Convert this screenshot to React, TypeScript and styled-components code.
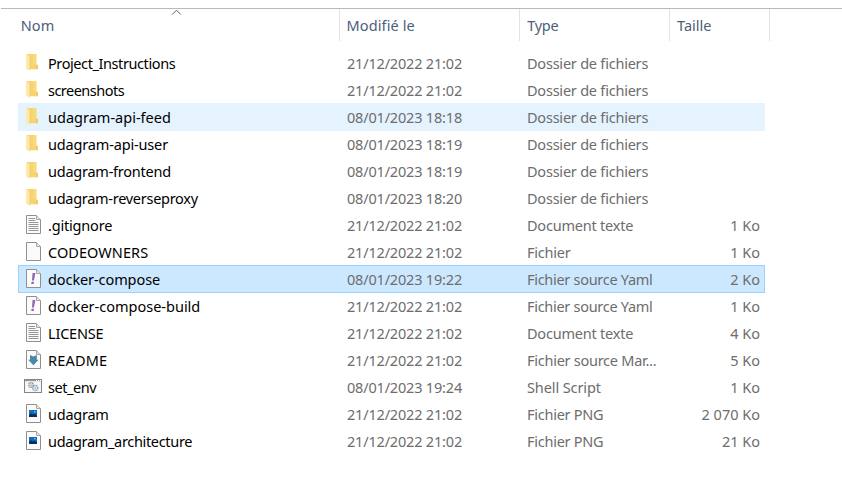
import React from "react";
import styled, { createGlobalStyle, css } from "styled-components";

const GlobalStyle = createGlobalStyle`
  *, *::before, *::after { box-sizing: border-box; }
  body {
    margin: 0;
    background: #fff;
    font-family: "Noto Sans", "Open Sans", sans-serif;
    font-size: 14.5px;
    color: #6d6d6d;
  }
`;

const COLUMNS = "322px 180px 150px 95px";

const Window = styled.main`
  width: 842px;
  height: 493px;
  padding-top: 8px;
  overflow: hidden;
`;

const Header = styled.header`
  position: relative;
  display: flex;
  height: 33px;
  margin-left: 1px;
  border-top: 1px solid #b9b9b9;
`;

const HeaderCell = styled.div<{ $width: number; $pad: number }>`
  width: ${(p) => p.$width}px;
  padding-left: ${(p) => p.$pad}px;
  border-right: 1px solid #e3e3e3;
  line-height: 33px;
  color: #4c607a;
`;

const SortArrow = styled.svg`
  position: absolute;
  left: 170px;
  top: 0;
`;

const List = styled.div`
  display: flex;
  flex-direction: column;
  margin: 8px 0 0 18px;
  width: 747px;
`;

type RowState = "normal" | "hover" | "selected";

const Row = styled.div<{ $state: RowState }>`
  display: grid;
  grid-template-columns: ${COLUMNS};
  height: 28px;
  margin-bottom: -1px;
  line-height: 28px;
  ${(p) => p.$state === "hover" && css`background: #e5f3ff;`}
  ${(p) =>
    p.$state === "selected" &&
    css`
      background: #cce8ff;
      box-shadow: inset 0 0 0 1px #99d1ff;
    `}
`;

const NameCell = styled.div`
  display: flex;
  padding-left: 6px;
  gap: 6px;
  color: #000;
`;

const DateCell = styled.div`
  padding-left: 7px;
`;

const TypeCell = styled.div`
  padding-left: 7px;
`;

const SizeCell = styled.div`
  padding-right: 5px;
  text-align: right;
`;

const Label = styled.span<{ $track?: number }>`
  letter-spacing: ${(p) => p.$track ?? 0}px;
  white-space: pre;
`;

const IconBox = styled.svg`
  flex: none;
  width: 18px;
  height: 28px;
`;

type IconKind = "folder" | "text" | "blank" | "yaml" | "markdown" | "script" | "image";

const Sheet = () => (
  <>
    <path d="M2.5 4.5H12.5L16.5 8.5V22.5H2.5Z" fill="#fbfbfb" stroke="#8f8f8f" />
    <path d="M12.5 4.5V8.5H16.5" fill="#e8e8e8" stroke="#a6a6a6" />
  </>
);

function FileIcon({ kind }: { kind: IconKind }) {
  switch (kind) {
    case "folder":
      return (
        <IconBox viewBox="0 0 18 28">
          <path d="M3 5H12.3V15.5L13.7 16V20.3H3Z" fill="#f6d373" />
          <path d="M9 5H12.3V15.5H9Z" fill="#f9d978" />
          <path d="M12.3 15.5L13.8 16V20.3H12.3Z" fill="#efc765" />
          <path d="M2 5L6 7.3V22L2 19.6Z" fill="#ffe9a6" />
          <path d="M6 7.3V20.3" stroke="#e8c56b" strokeWidth=".7" />
        </IconBox>
      );
    case "text":
      return (
        <IconBox viewBox="0 0 18 28">
          <Sheet />
          <path
            d="M4.5 7.5H11M4.5 9.5H11.5M4.5 11.5H14.5M4.5 13.5H14.5M4.5 15.5H14.5M4.5 17.5H14.5M4.5 19.5H14.5"
            stroke="#969696"
          />
        </IconBox>
      );
    case "blank":
      return (
        <IconBox viewBox="0 0 18 28">
          <Sheet />
        </IconBox>
      );
    case "yaml":
      return (
        <IconBox viewBox="0 0 18 28">
          <Sheet />
          <path d="M8.6 8H11.4L9.9 15.5H8Z" fill="#8e63b5" />
          <path d="M7.7 16.7H10L9.6 19H7.2Z" fill="#8e63b5" />
        </IconBox>
      );
    case "markdown":
      return (
        <IconBox viewBox="0 0 18 28">
          <Sheet />
          <path d="M6 9L9.4 10.5L12.8 9V13.7H14.6L9.4 19.2L4.2 13.7H6Z" fill="#4a87a8" />
        </IconBox>
      );
    case "script":
      return (
        <IconBox viewBox="0 0 18 28">
          <rect x=".5" y="6.5" width="17" height="13" fill="#f7f7f7" stroke="#858585" />
          <path d="M1 7.6H17" stroke="#9b9b9b" strokeWidth="1.3" />
          <path d="M12 7.5H13M14 7.5H15M16 7.5H17" stroke="#fff" />
          <circle cx="7" cy="12" r="2.3" fill="#ececec" stroke="#8d8d8d" strokeWidth="1.4" strokeDasharray="1.2 .6" />
          <circle cx="11.3" cy="15" r="2.6" fill="#e4edf3" stroke="#7f9cb0" strokeWidth="1.4" strokeDasharray="1.2 .6" />
          <circle cx="7" cy="12" r=".7" fill="#999" />
          <circle cx="11.3" cy="15" r=".8" fill="#7f9cb0" />
        </IconBox>
      );
    case "image":
      return (
        <IconBox viewBox="0 0 18 28">
          <Sheet />
          <rect x="5" y="10" width="8" height="7" fill="#0f6cbd" />
          <path d="M5 15L7 13.2L9 14.6L10.5 13.6L13 15.6V17H5Z" fill="#0a2f57" />
          <circle cx="10.8" cy="11.7" r=".8" fill="#8fd3ff" />
        </IconBox>
      );
  }
}

interface Entry {
  icon: IconKind;
  name: string;
  track: number;
  date: string;
  type: string;
  typeTrack: number;
  size?: string;
  state?: RowState;
}

const folder = (name: string, track: number, date: string, state?: RowState): Entry => ({
  icon: "folder",
  name,
  track,
  date,
  type: "Dossier de fichiers",
  typeTrack: -0.22,
  state,
});

const entries: Entry[] = [
  folder("Project_Instructions", -0.41, "21/12/2022 21:02"),
  folder("screenshots", -0.52, "21/12/2022 21:02"),
  folder("udagram-api-feed", 0.01, "08/01/2023 18:18", "hover"),
  folder("udagram-api-user", -0.16, "08/01/2023 18:19"),
  folder("udagram-frontend", -0.24, "08/01/2023 18:19"),
  folder("udagram-reverseproxy", -0.28, "08/01/2023 18:20"),
  { icon: "text", name: ".gitignore", track: -0.19, date: "21/12/2022 21:02", type: "Document texte", typeTrack: -0.21, size: "1 Ko" },
  { icon: "blank", name: "CODEOWNERS", track: 0.06, date: "21/12/2022 21:02", type: "Fichier", typeTrack: -0.22, size: "1 Ko" },
  { icon: "yaml", name: "docker-compose", track: -0.09, date: "08/01/2023 19:22", type: "Fichier source Yaml", typeTrack: -0.29, size: "2 Ko", state: "selected" },
  { icon: "yaml", name: "docker-compose-build", track: 0, date: "21/12/2022 21:02", type: "Fichier source Yaml", typeTrack: -0.29, size: "1 Ko" },
  { icon: "text", name: "LICENSE", track: -0.19, date: "21/12/2022 21:02", type: "Document texte", typeTrack: -0.21, size: "4 Ko" },
  { icon: "markdown", name: "README", track: 0.2, date: "21/12/2022 21:02", type: "Fichier source Mar...", typeTrack: -0.26, size: "5 Ko" },
  { icon: "script", name: "set_env", track: -0.45, date: "08/01/2023 19:24", type: "Shell Script", typeTrack: -0.1, size: "1 Ko" },
  { icon: "image", name: "udagram", track: -0.25, date: "21/12/2022 21:02", type: "Fichier PNG", typeTrack: -0.26, size: "2 070 Ko" },
  { icon: "image", name: "udagram_architecture", track: -0.33, date: "21/12/2022 21:02", type: "Fichier PNG", typeTrack: -0.26, size: "21 Ko" },
];

export default function App() {
  return (
    <>
      <GlobalStyle />
      <Window>
        <Header>
          <HeaderCell $width={339} $pad={19.8}>
            <Label $track={0.05}>Nom</Label>
          </HeaderCell>
          <HeaderCell $width={180} $pad={6.6}>
            <Label $track={0.1}>Modifié le</Label>
          </HeaderCell>
          <HeaderCell $width={150} $pad={7.3}>
            <Label $track={-0.3}>Type</Label>
          </HeaderCell>
          <HeaderCell $width={100} $pad={7}>
            <Label>Taille</Label>
          </HeaderCell>
          <SortArrow width="12" height="7" viewBox="0 0 12 7">
            <path d="M1.2 5.5L5.5 1.2L9.8 5.5" fill="none" stroke="#5c5c5c" />
          </SortArrow>
        </Header>
        <List>
          {entries.map((e) => (
            <Row key={e.name} $state={e.state ?? "normal"}>
              <NameCell>
                <FileIcon kind={e.icon} />
                <Label $track={e.track}>{e.name}</Label>
              </NameCell>
              <DateCell>
                <Label $track={-0.185}>{e.date}</Label>
              </DateCell>
              <TypeCell>
                <Label $track={e.typeTrack}>{e.type}</Label>
              </TypeCell>
              <SizeCell>{e.size && <Label>{e.size}</Label>}</SizeCell>
            </Row>
          ))}
        </List>
      </Window>
    </>
  );
}
